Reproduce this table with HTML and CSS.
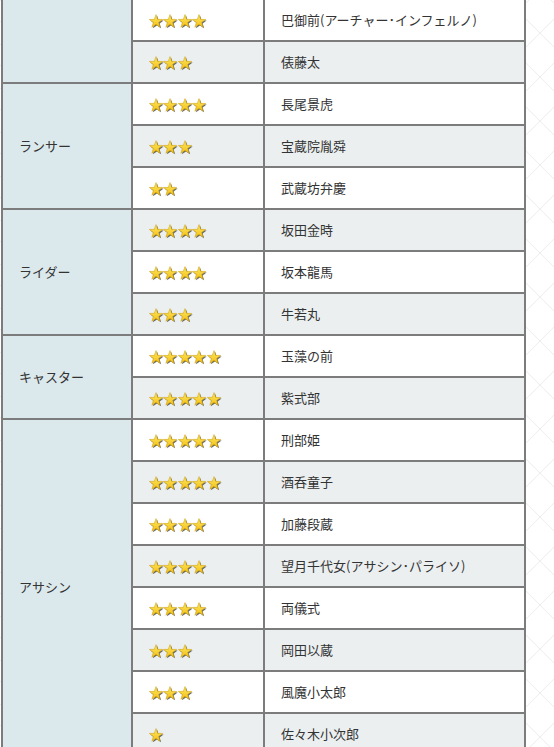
FILE: index.html
```html
<!DOCTYPE html>
<html lang="ja">
<head>
<meta charset="utf-8">
<title>サーヴァント一覧</title>
<link rel="stylesheet" href="styles.css">
</head>
<body>
<svg class="defs" width="0" height="0" aria-hidden="true">
  <defs>
    <linearGradient id="gold" x1="0" y1="0" x2="0" y2="1">
      <stop offset="0" stop-color="#ffe866"/>
      <stop offset="1" stop-color="#f2bf12"/>
    </linearGradient>
    <symbol id="star" viewBox="0 0 15 15">
      <path d="M7 0.6 L8.65 5.33 L13.66 5.44 L9.66 8.47 L11.11 13.26 L7 10.4 L2.89 13.26 L4.34 8.47 L0.34 5.44 L5.35 5.33 Z" transform="translate(1 1)" fill="#3a3a3a" opacity="0.75"/>
      <path d="M7 0.6 L8.65 5.33 L13.66 5.44 L9.66 8.47 L11.11 13.26 L7 10.4 L2.89 13.26 L4.34 8.47 L0.34 5.44 L5.35 5.33 Z" fill="url(#gold)" stroke="#c89a00" stroke-width="0.5"/>
    </symbol>
  </defs>
</svg>
<table class="servants">
  <colgroup><col class="c-class"><col class="c-rarity"><col class="c-name"></colgroup>
  <tbody>
    <tr><td class="cls" rowspan="2"></td><td class="rar"><span class="stars"><svg><use href="#star"/></svg><svg><use href="#star"/></svg><svg><use href="#star"/></svg><svg><use href="#star"/></svg></span></td><td class="name">巴御前(アーチャー･インフェルノ)</td></tr>
    <tr class="alt"><td class="rar"><span class="stars"><svg><use href="#star"/></svg><svg><use href="#star"/></svg><svg><use href="#star"/></svg></span></td><td class="name">俵藤太</td></tr>

    <tr><td class="cls" rowspan="3">ランサー</td><td class="rar"><span class="stars"><svg><use href="#star"/></svg><svg><use href="#star"/></svg><svg><use href="#star"/></svg><svg><use href="#star"/></svg></span></td><td class="name">長尾景虎</td></tr>
    <tr class="alt"><td class="rar"><span class="stars"><svg><use href="#star"/></svg><svg><use href="#star"/></svg><svg><use href="#star"/></svg></span></td><td class="name">宝蔵院胤舜</td></tr>
    <tr><td class="rar"><span class="stars"><svg><use href="#star"/></svg><svg><use href="#star"/></svg></span></td><td class="name">武蔵坊弁慶</td></tr>

    <tr class="alt"><td class="cls" rowspan="3">ライダー</td><td class="rar"><span class="stars"><svg><use href="#star"/></svg><svg><use href="#star"/></svg><svg><use href="#star"/></svg><svg><use href="#star"/></svg></span></td><td class="name">坂田金時</td></tr>
    <tr><td class="rar"><span class="stars"><svg><use href="#star"/></svg><svg><use href="#star"/></svg><svg><use href="#star"/></svg><svg><use href="#star"/></svg></span></td><td class="name">坂本龍馬</td></tr>
    <tr class="alt"><td class="rar"><span class="stars"><svg><use href="#star"/></svg><svg><use href="#star"/></svg><svg><use href="#star"/></svg></span></td><td class="name">牛若丸</td></tr>

    <tr><td class="cls" rowspan="2">キャスター</td><td class="rar"><span class="stars"><svg><use href="#star"/></svg><svg><use href="#star"/></svg><svg><use href="#star"/></svg><svg><use href="#star"/></svg><svg><use href="#star"/></svg></span></td><td class="name">玉藻の前</td></tr>
    <tr class="alt"><td class="rar"><span class="stars"><svg><use href="#star"/></svg><svg><use href="#star"/></svg><svg><use href="#star"/></svg><svg><use href="#star"/></svg><svg><use href="#star"/></svg></span></td><td class="name">紫式部</td></tr>

    <tr><td class="cls" rowspan="8">アサシン</td><td class="rar"><span class="stars"><svg><use href="#star"/></svg><svg><use href="#star"/></svg><svg><use href="#star"/></svg><svg><use href="#star"/></svg><svg><use href="#star"/></svg></span></td><td class="name">刑部姫</td></tr>
    <tr class="alt"><td class="rar"><span class="stars"><svg><use href="#star"/></svg><svg><use href="#star"/></svg><svg><use href="#star"/></svg><svg><use href="#star"/></svg><svg><use href="#star"/></svg></span></td><td class="name">酒呑童子</td></tr>
    <tr><td class="rar"><span class="stars"><svg><use href="#star"/></svg><svg><use href="#star"/></svg><svg><use href="#star"/></svg><svg><use href="#star"/></svg></span></td><td class="name">加藤段蔵</td></tr>
    <tr class="alt"><td class="rar"><span class="stars"><svg><use href="#star"/></svg><svg><use href="#star"/></svg><svg><use href="#star"/></svg><svg><use href="#star"/></svg></span></td><td class="name">望月千代女(アサシン･パライソ)</td></tr>
    <tr><td class="rar"><span class="stars"><svg><use href="#star"/></svg><svg><use href="#star"/></svg><svg><use href="#star"/></svg><svg><use href="#star"/></svg></span></td><td class="name">両儀式</td></tr>
    <tr class="alt"><td class="rar"><span class="stars"><svg><use href="#star"/></svg><svg><use href="#star"/></svg><svg><use href="#star"/></svg></span></td><td class="name">岡田以蔵</td></tr>
    <tr><td class="rar"><span class="stars"><svg><use href="#star"/></svg><svg><use href="#star"/></svg><svg><use href="#star"/></svg></span></td><td class="name">風魔小太郎</td></tr>
    <tr class="alt"><td class="rar"><span class="stars"><svg><use href="#star"/></svg></span></td><td class="name">佐々木小次郎</td></tr>
  </tbody>
</table>
</body>
</html>
```

FILE: styles.css
```css
html, body {
  margin: 0;
  padding: 0;
}
body {
  background-color: #fff;
  background-image:
    linear-gradient(45deg, transparent calc(50% - 0.8px), rgba(0,0,0,0.06) 50%, transparent calc(50% + 0.8px)),
    linear-gradient(-45deg, transparent calc(50% - 0.8px), rgba(0,0,0,0.06) 50%, transparent calc(50% + 0.8px));
  background-size: 44px 44px;
  background-position: 518px 11px;
  font-family: "Noto Sans CJK JP", "Noto Sans", sans-serif;
  font-size: 13px;
  color: #333;
  height: 747px;
  overflow: hidden;
}
.defs {
  position: absolute;
  width: 0;
  height: 0;
}
.servants {
  margin-left: 1px;
  border-collapse: separate;
  border-spacing: 0;
  table-layout: fixed;
  width: 525px;
  border-left: 2px solid #7c7c7c;
}
.c-class { width: 130px; }
.c-rarity { width: 132px; }
.c-name { width: 261px; }
.servants td {
  box-sizing: border-box;
  height: 42px;
  padding: 0 0 0 16px;
  border-right: 2px solid #7c7c7c;
  border-bottom: 2px solid #7c7c7c;
  background: #fff;
  vertical-align: middle;
  line-height: 18px;
  white-space: nowrap;
}
.servants tr.alt td {
  background: #ebeff0;
}
.servants td.cls,
.servants tr.alt td.cls {
  background: #dbe8ec;
}
.stars {
  display: inline-flex;
  vertical-align: middle;
  margin-top: 1px;
}
.stars svg {
  width: 15px;
  height: 15px;
  margin-right: -0.6px;
}
```
